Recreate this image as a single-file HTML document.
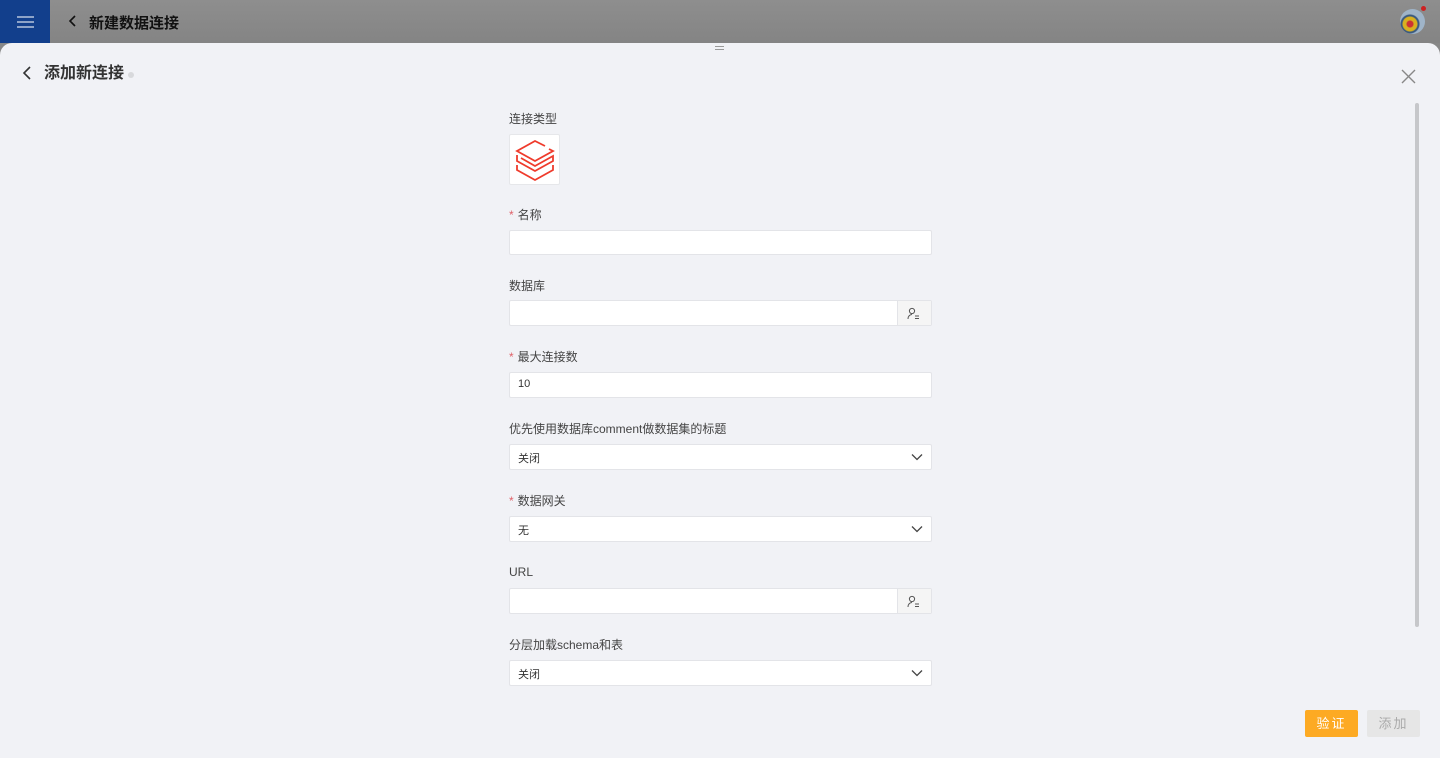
<!DOCTYPE html>
<html><head><meta charset="utf-8"><style>
*{box-sizing:border-box;margin:0;padding:0}
body{width:1440px;height:758px;overflow:hidden;background:#878787;font-family:"Liberation Sans","Noto Sans CJK SC",sans-serif;position:relative}
.top{position:absolute;left:0;top:0;width:1440px;height:43px;background:linear-gradient(#8e8e8e,#848484)}
.menu{position:absolute;left:0;top:0;width:50px;height:43px;background:#123f8c}
.menu i{position:absolute;left:17px;width:17px;height:1.5px;background:#8da3c8}
.ttl{position:absolute;left:89px;top:12px;font-size:15px;font-weight:bold;color:#111}
.panel{position:absolute;left:0;top:43px;width:1440px;height:715px;background:#f1f2f6;border-radius:12px 12px 0 0}
.lbl{position:absolute;left:509px;font-size:12px;color:#444}
.lbl b{color:#e0626a;font-weight:normal;margin-right:4px}
.inp{position:absolute;left:509px;width:423px;height:26px;background:#fff;border:1px solid #e3e4e8;border-radius:2px;font-size:11px;color:#333;padding:5px 8px}
.btnr{position:absolute;right:0;top:0;width:34px;height:24px;border-left:1px solid #e3e4e8;background:#f5f5f5}
.chev{position:absolute;right:8px;top:8px}
.b{position:absolute;top:710px;width:53px;height:27px;font-size:13px;text-align:center;line-height:27px;border-radius:2px;letter-spacing:2px}
</style></head><body>
<div class="top"><div class="menu"><i style="top:16px"></i><i style="top:21px"></i><i style="top:26px"></i></div>
<svg style="position:absolute;left:68px;top:14px" width="10" height="14"><path d="M7 2L2 7l5 5" stroke="#111" stroke-width="1.6" fill="none"/></svg>
<div class="ttl">新建数据连接</div>
<div style="position:absolute;left:1400px;top:9px;width:25px;height:25px;border-radius:50%;background:radial-gradient(circle at 40% 60%,#c33 0 3px,#d8b020 4px 7px,#3a5a80 8px 9px,#9fb4c8 10px)"></div>
<div style="position:absolute;left:1421px;top:6px;width:5px;height:5px;border-radius:50%;background:#c22"></div>
</div>
<div class="panel">
<div style="position:absolute;left:715px;top:3px;width:9px;height:1px;background:#999;box-shadow:0 3px 0 #999"></div>
<svg style="position:absolute;left:21px;top:22px" width="12" height="16"><path d="M9 2L3 8l6 6" stroke="#333" stroke-width="1.6" fill="none"/></svg>
<div style="position:absolute;left:44px;top:20px;font-size:16px;font-weight:bold;color:#333;line-height:22px">添加新连接</div>
<div style="position:absolute;left:128px;top:29px;width:6px;height:6px;border-radius:50%;background:#d8d9dc"></div>
<svg style="position:absolute;left:1401px;top:26px" width="15" height="15"><path d="M1 1l13 13M14 1L1 14" stroke="#888" stroke-width="1.4"/></svg>
<div style="position:absolute;left:1415px;top:60px;width:4px;height:524px;border-radius:2px;background:#c6c7ca"></div>
</div>
<div class="lbl" style="top:110px">连接类型</div>
<div style="position:absolute;left:509px;top:134px;width:51px;height:51px;background:#fff;border:1px solid #e6e7ea;border-radius:2px">
<svg style="position:absolute;left:-1px;top:-1px" width="51" height="51" viewBox="0 0 51 51"><g stroke="#ef3b2c" stroke-width="1.8" fill="none" stroke-linejoin="miter"><path d="M36 12L26 7 8 17l18 10 18-10-4-2"/><path d="M8 21v6l18 10 18-10v-5l-18 10-14-8"/><path d="M8 31v5l18 10 18-10v-5"/></g></svg></div>
<div class="lbl" style="top:206px"><b>*</b>名称</div>
<div class="inp" style="top:230px;height:25px"></div>
<div class="lbl" style="top:277px">数据库</div>
<div class="inp" style="top:300px"><div class="btnr"><svg style="position:absolute;left:9px;top:6px" width="14" height="13"><circle cx="5" cy="4" r="2.6" stroke="#555" fill="none"/><path d="M1 12c0-3 2-4.5 4-4.5M8 9h4M8 11.5h4" stroke="#555" fill="none"/></svg></div></div>
<div class="lbl" style="top:348px"><b>*</b>最大连接数</div>
<div class="inp" style="top:372px">10</div>
<div class="lbl" style="top:420px">优先使用数据库comment做数据集的标题</div>
<div class="inp" style="top:444px">关闭<svg class="chev" width="12" height="8"><path d="M1 1.5l5 5 5-5" stroke="#444" stroke-width="1.3" fill="none"/></svg></div>
<div class="lbl" style="top:492px"><b>*</b>数据网关</div>
<div class="inp" style="top:516px">无<svg class="chev" width="12" height="8"><path d="M1 1.5l5 5 5-5" stroke="#444" stroke-width="1.3" fill="none"/></svg></div>
<div class="lbl" style="top:565px">URL</div>
<div class="inp" style="top:588px"><div class="btnr"><svg style="position:absolute;left:9px;top:6px" width="14" height="13"><circle cx="5" cy="4" r="2.6" stroke="#555" fill="none"/><path d="M1 12c0-3 2-4.5 4-4.5M8 9h4M8 11.5h4" stroke="#555" fill="none"/></svg></div></div>
<div class="lbl" style="top:636px">分层加载schema和表</div>
<div class="inp" style="top:660px">关闭<svg class="chev" width="12" height="8"><path d="M1 1.5l5 5 5-5" stroke="#444" stroke-width="1.3" fill="none"/></svg></div>
<div class="b" style="left:1305px;background:#fdaa23;color:#fff">验证</div>
<div class="b" style="left:1367px;background:#e6e6e6;color:#aaa">添加</div>
</body></html>
